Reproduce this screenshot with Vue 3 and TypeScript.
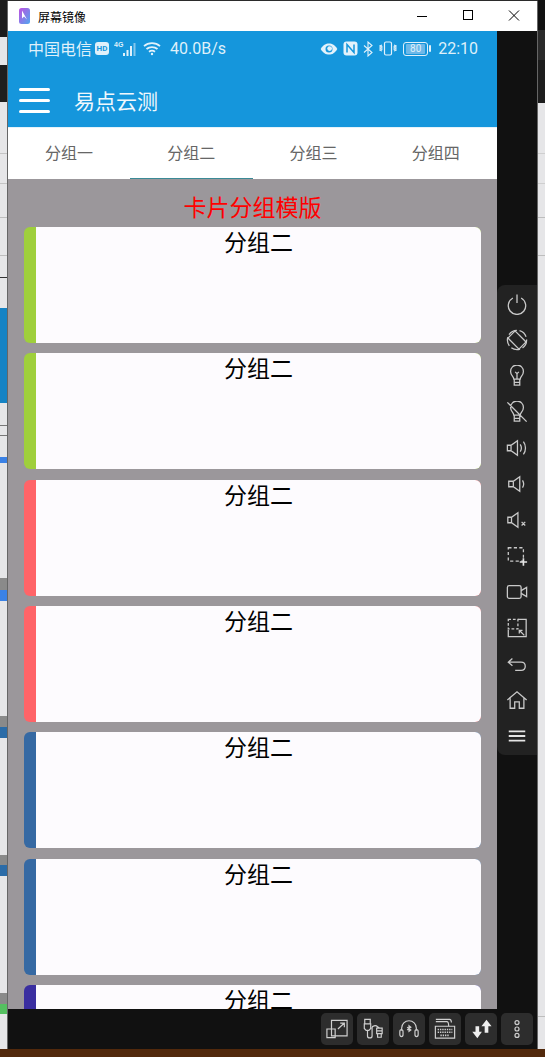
<script setup lang="ts">
interface Card {
  color: string
}

interface Strip {
  top: number
  height: number
  color: string
}

const tabs = ['分组一', '分组二', '分组三', '分组四']
const active = 1

const cards: Card[] = [
  { color: '#9fcf3c' },
  { color: '#9fcf3c' },
  { color: '#ff6468' },
  { color: '#ff6468' },
  { color: '#3669a3' },
  { color: '#3669a3' },
  { color: '#3a2ea0' },
]

// bits of the other windows that stick out left and right of the mirror window
const leftStrips: Strip[] = [
  { top: 0, height: 37, color: '#1c1c1c' },
  { top: 65, height: 37, color: '#1e1e1e' },
  { top: 153, height: 1, color: '#c4c4c4' },
  { top: 183, height: 1, color: '#c4c4c4' },
  { top: 217, height: 1, color: '#bdbdbd' },
  { top: 255, height: 1, color: '#bdbdbd' },
  { top: 277, height: 1, color: '#333' },
  { top: 308, height: 95, color: '#1583c4' },
  { top: 425, height: 1, color: '#777' },
  { top: 435, height: 1, color: '#777' },
  { top: 457, height: 6, color: '#3b82e6' },
  { top: 578, height: 12, color: '#8a8a8a' },
  { top: 590, height: 11, color: '#3b82e6' },
  { top: 716, height: 11, color: '#8a8a8a' },
  { top: 727, height: 11, color: '#2b6ca8' },
  { top: 855, height: 10, color: '#8a8a8a' },
  { top: 865, height: 11, color: '#2b6ca8' },
  { top: 993, height: 11, color: '#8a8a8a' },
  { top: 1004, height: 10, color: '#55c060' },
]

const rightStrips: Strip[] = [
  { top: 0, height: 30, color: '#111' },
  { top: 30, height: 30, color: '#2a2a2a' },
  { top: 60, height: 43, color: '#1d1d1d' },
  { top: 153, height: 1, color: '#cfcfcf' },
  { top: 183, height: 1, color: '#cfcfcf' },
  { top: 217, height: 1, color: '#bdbdbd' },
  { top: 255, height: 1, color: '#bdbdbd' },
  { top: 1016, height: 1, color: '#bdbdbd' },
]
</script>

<template>
  <div class="desktop">
    <div class="behind left">
      <div
        v-for="s in leftStrips"
        :key="s.top"
        class="strip"
        :style="{ top: s.top + 'px', height: s.height + 'px', background: s.color }"
      ></div>
    </div>
    <div class="behind right">
      <div
        v-for="s in rightStrips"
        :key="s.top"
        class="strip"
        :style="{ top: s.top + 'px', height: s.height + 'px', background: s.color }"
      ></div>
    </div>

    <div class="window">
      <div class="titlebar">
        <svg class="app-logo" width="11" height="16" viewBox="0 0 11 16">
          <defs>
            <linearGradient id="lg" x1="0" y1="0" x2="1" y2="1">
              <stop offset="0" stop-color="#c04fe0" />
              <stop offset="1" stop-color="#4fa8f0" />
            </linearGradient>
          </defs>
          <rect width="11" height="16" rx="2.5" fill="url(#lg)" />
          <path d="M3 2.5v8l2-2 3 3z" fill="#fff" />
        </svg>
        <span class="title">屏幕镜像</span>
        <div class="win-btns">
          <svg width="46" height="30" viewBox="0 0 46 30"><path d="M18 15.5h10" stroke="#000" /></svg>
          <svg width="46" height="30" viewBox="0 0 46 30"><rect x="18.5" y="9.5" width="9" height="9" fill="none" stroke="#000" /></svg>
          <svg width="46" height="30" viewBox="0 0 46 30"><path d="M18 9.5l10 10M28 9.5l-10 10" stroke="#000" /></svg>
        </div>
      </div>

      <div class="body">
        <div class="phone">
          <div class="statusbar">
            <span class="carrier">中国电信</span>
            <span class="hd">HD</span>
            <svg class="sig" width="24" height="16" viewBox="0 0 24 16" fill="#dff0fa">
              <text x="0" y="6" font-size="7" font-family="Liberation Sans" font-weight="700">4G</text>
              <rect x="9" y="12" width="2" height="3" />
              <rect x="12.5" y="9" width="2" height="6" />
              <rect x="16" y="5" width="2" height="10" />
              <rect x="19.5" y="2" width="2" height="13" opacity=".55" />
            </svg>
            <svg class="wifi" width="18" height="15" viewBox="0 0 18 15" fill="none" stroke="#e3f2fb" stroke-width="1.8">
              <path d="M1 5.2c4.5-4 11.500-4 16 0M3.5 8c3-2.600 8-2.600 11 0M6 10.700c1.700-1.300 4.300-1.300 6 0" />
              <circle cx="9" cy="13" r="1.2" fill="#e3f2fb" stroke="none" />
            </svg>
            <span class="speed">40.0B/s</span>
            <span class="spacer"></span>
            <svg class="st-icon" width="18" height="12" viewBox="0 0 19 13">
              <path d="M.5 6.500C3 2 6 .5 9.500 .5s6.500 1.500 9 6c-2.500 4.500-5.500 6-9 6s-6.500-1.500-9-6z" fill="#e3f2fb" />
              <circle cx="9.500" cy="6.500" r="3.800" fill="#1596dc" />
              <circle cx="10.200" cy="6" r="2.600" fill="#e3f2fb" />
            </svg>
            <svg class="st-icon" width="15" height="15" viewBox="0 0 15 15">
              <rect x=".5" y=".5" width="14" height="14" rx="3" fill="#e3f2fb" />
              <path d="M4 11.500v-8l7 8v-8" fill="none" stroke="#1596dc" stroke-width="1.500" />
            </svg>
            <svg class="st-icon bt" width="10" height="16" viewBox="0 0 10 15" fill="none" stroke="#e3f2fb" stroke-width="1.100">
              <path d="M1 4l8 7-4 3.500V.5L9 4l-8 7" />
            </svg>
            <svg class="st-icon vib" width="18" height="15" viewBox="0 0 18 14" fill="none" stroke="#e3f2fb" stroke-width="1.200">
              <rect x="5.500" y=".5" width="7" height="13" rx="1.500" />
              <path d="M3 3.500l-2 1 2 1-2 1 2 1-2 1 2 1M15 3.500l2 1-2 1 2 1-2 1 2 1-2 1" />
            </svg>
            <div class="battery">
              <div class="batt-body"><span class="batt-num">80</span></div>
              <div class="batt-tip"></div>
            </div>
            <span class="clock">22:10</span>
          </div>

          <div class="appbar">
            <div class="burger"><i></i><i></i><i></i></div>
            <span class="app-title">易点云测</span>
          </div>

          <div class="tabs">
            <div v-for="(t, i) in tabs" :key="t" class="tab" :class="{ on: i === active }">
              <span class="tab-text">{{ t }}</span>
            </div>
          </div>

          <div class="content">
            <div class="heading">卡片分组模版</div>
            <div class="list">
              <div v-for="(c, i) in cards" :key="i" class="card" :style="{ background: c.color }">
                <div class="card-inner">分组二</div>
              </div>
            </div>
          </div>
        </div>

        <div class="side">
          <div class="toolbar">
            <svg viewBox="0 0 24 24"><path d="M7.500 5.500a9.500 9.500 0 1 0 9 0M12 1.500v9.500" /></svg>
            <svg viewBox="0 0 24 24"><circle cx="12" cy="12" r="10.500" stroke-dasharray="10 3" /><rect x="6.500" y="3.500" width="11" height="17" rx="1.500" transform="rotate(-45 12 12)" /></svg>
            <svg viewBox="0 0 24 24"><path d="M8.500 15.500c0-3-3.500-4-3.500-8.500a7 7 0 0 1 14 0c0 4.500-3.500 5.500-3.500 8.500zM9 19h6M9 15.500V22h6v-6.500M12 15.500v-6M10 7.500l2 2 2-2" /></svg>
            <svg viewBox="0 0 24 24"><path d="M8.500 15.500c0-3-3.500-4-3.500-8.500a7 7 0 0 1 14 0c0 4.500-3.500 5.500-3.500 8.500zM9 19h6M9 15.500V22h6v-6.500M1.500 1.500l21 21" /></svg>
            <svg viewBox="0 0 24 24"><path d="M1.500 9v6h4l7 5V4l-7 5zM5.500 9v6M15.500 8c1.600 2.500 1.600 5.500 0 8M19 5c3 4 3 10 0 14" /></svg>
            <svg viewBox="0 0 24 24"><path d="M3 9v6h5l7 5V4L8 9zM8 9v6M18 8c1.600 2.500 1.600 5.500 0 8" /></svg>
            <svg viewBox="0 0 24 24"><path d="M2 9v6h4l7 5V4L6 9zM6 9v6M17 14l4 4M21 14l-4 4" /></svg>
            <svg viewBox="0 0 24 24"><path d="M2.500 3h16.500v14.500H2.500z" stroke-dasharray="3.500 2.500" /><path class="thick-cross" d="M19 14.500v8M15 18.500h8" /></svg>
            <svg viewBox="0 0 24 24"><rect x="1.500" y="5" width="15" height="14" rx="2" /><path d="M16.500 10.500l6-3.500v10l-6-3.500" /></svg>
            <svg viewBox="0 0 24 24"><path d="M13 2.500h9v19H2.500V14" /><path d="M2.500 2.500h10.500V13H2.500z" stroke-dasharray="3 2" /><path d="M20 20l-5.500-5.500M14.500 18v-3.500H18" /></svg>
            <svg viewBox="0 0 24 24"><path d="M7 6L2.500 10 7 14M2.500 10h14c6 0 6 9 0 9H10" /></svg>
            <svg viewBox="0 0 24 24"><path d="M1.500 12L12 3l10.500 9M4.500 10v11h5v-7h5v7h5V10" /></svg>
            <svg viewBox="0 0 24 24"><path class="thick" d="M3 7h18M3 12h18M3 17h18" /></svg>
          </div>
        </div>
      </div>

      <div class="bottombar">
        <div class="tbtn">
          <svg viewBox="0 0 24 24"><path d="M6 2.500h17v17H6zM1 12h9v9.500H1zM13 12l7-6.500M15.500 5.500H20V10" /></svg>
        </div>
        <div class="tbtn">
          <svg viewBox="0 0 24 24"><path d="M3 1.500h6v5H3zM2.500 6.500h7v5l-2 2h-3l-2-2zM6 13.500v6c0 3 5 3 5 0v-9c0-2 4-3 6-1l2 1.500M16 11h6v6h-6zM17 17h4v4h-4zM16 14h6" /></svg>
        </div>
        <div class="tbtn">
          <svg viewBox="0 0 24 24"><path d="M4 14v-3a8 8 0 0 1 16 0v3M2 15c0-3 3.500-3 3.500 0v3c0 3-3.500 3-3.500 0zM22 15c0-3-3.500-3-3.500 0v3c0 3 3.500 3 3.500 0zM10 10l4 3-2 1.500v-6l2 1.500-4 3" /></svg>
        </div>
        <div class="tbtn">
          <svg viewBox="0 0 24 24"><path d="M2 1.500h15c2 0 2 2 2 3.500M2 4h12c2 0 2 3 2 5" /><path d="M1.500 9h21v13h-21z" /><path class="dash" d="M4 12.500h16M4 15.500h16M7 19h10" /></svg>
        </div>
        <div class="tbtn">
          <svg viewBox="0 0 24 24"><path class="solid" d="M6 9v6H2.500L8 22l5-7H10V9zM18 2l-5.500 7H16v7h4V9h3.500z" /></svg>
        </div>
        <div class="tbtn">
          <svg viewBox="0 0 24 24"><circle cx="12" cy="5" r="2.200" /><circle cx="12" cy="12" r="2.200" /><circle cx="12" cy="19" r="2.200" /></svg>
        </div>
      </div>
    </div>

    <div class="ground"></div>
  </div>
</template>

<style>
html,
body {
  margin: 0;
  padding: 0;
  overflow: hidden;
}
</style>

<style scoped>
.desktop {
  position: relative;
  width: 545px;
  height: 1057px;
  background: #2b2b2b;
  overflow: hidden;
  font-family: 'Noto Sans CJK SC', 'Liberation Sans', sans-serif;
}

.behind {
  position: absolute;
  top: 0;
  height: 1049px;
  background: #e6e6e8;
}

.behind.left {
  left: 0;
  width: 7px;
}

.behind.right {
  left: 538px;
  width: 7px;
}

.strip {
  position: absolute;
  left: 0;
  width: 100%;
}

.window {
  position: absolute;
  left: 7px;
  top: 1px;
  width: 531px;
  height: 1048px;
  box-sizing: border-box;
  display: flex;
  flex-direction: column;
  background: #111;
  border-left: 1px solid #666;
  border-right: 1px solid #666;
}

.titlebar {
  height: 30px;
  flex: none;
  display: flex;
  align-items: center;
  background: #fff;
}

.app-logo {
  margin-left: 11px;
}

.title {
  margin-left: 8px;
  font-size: 12px;
  color: #000;
}

.win-btns {
  margin-left: auto;
  display: flex;
}

.body {
  flex: 1;
  min-height: 0;
  display: flex;
}

.phone {
  width: 489px;
  flex: none;
  display: flex;
  flex-direction: column;
  overflow: hidden;
}

.statusbar {
  height: 35px;
  flex: none;
  display: flex;
  align-items: center;
  padding: 0 19px 0 20px;
  background: #1596dc;
  color: #dff0fa;
  font-family: Roboto, 'Noto Sans CJK SC', sans-serif;
}

.carrier {
  font-size: 16px;
  font-family: 'Noto Sans CJK SC', sans-serif;
  line-height: 20px;
  padding-bottom: 2px;
}

.hd {
  margin-left: 3px;
  width: 14px;
  height: 13px;
  border-radius: 3px;
  background: #dff0fa;
  color: #1596dc;
  font-size: 8px;
  font-weight: 700;
  line-height: 13px;
  text-align: center;
}

.sig {
  margin-left: 5px;
}

.wifi {
  margin-left: 5px;
}

.speed {
  margin-left: 9px;
  font-size: 16px;
}

.spacer {
  flex: 1;
}

.st-icon {
  margin-right: 5px;
}

.st-icon.vib {
  margin-left: 1px;
  margin-right: 6px;
}

.battery {
  display: flex;
  align-items: center;
}

.batt-body {
  width: 23px;
  height: 12px;
  border: 1px solid #dff0fa;
  border-radius: 3px;
  display: flex;
  align-items: center;
  justify-content: center;
}

.batt-num {
  width: 19px;
  height: 10px;
  border-radius: 1px;
  background: #6db8e8;
  font-size: 10px;
  line-height: 10px;
  text-align: center;
}

.batt-tip {
  width: 2px;
  height: 7px;
  margin-left: 1px;
  background: #dff0fa;
  border-radius: 1px;
}

.clock {
  margin-left: 7px;
  font-size: 16px;
}

.appbar {
  height: 61px;
  flex: none;
  box-sizing: border-box;
  display: flex;
  align-items: center;
  padding: 6px 0 0 11px;
  background: #1596dc;
  color: #f0f8fd;
}

.burger {
  width: 31px;
  height: 25px;
  margin-top: 2px;
  display: flex;
  flex-direction: column;
  justify-content: space-between;
}

.burger i {
  display: block;
  height: 3px;
  border-radius: 2px;
  background: #fff;
}

.app-title {
  margin-left: 24px;
  font-size: 21px;
}

.tabs {
  height: 52px;
  flex: none;
  display: flex;
  background: #fff;
  border-top: 1px solid #e4f2fa;
  box-sizing: border-box;
}

.tab {
  flex: 1;
  display: flex;
  align-items: center;
  justify-content: center;
  padding-bottom: 3px;
  box-sizing: border-box;
  font-size: 16px;
  color: #666;
}

.tab.on {
  box-shadow: inset 0 -1px 0 #3b8a96;
}

.content {
  flex: 1;
  min-height: 0;
  background: #9b979b;
  overflow: hidden;
}

.heading {
  height: 48px;
  box-sizing: border-box;
  padding-top: 11px;
  font-size: 23px;
  line-height: 32px;
  color: #f00;
  text-align: center;
}

.list {
  display: flex;
  flex-direction: column;
  gap: 10.35px;
  padding: 0 16px;
}

.card {
  height: 116px;
  flex: none;
  padding-left: 12px;
  border-radius: 6px;
}

.card-inner {
  height: 100%;
  border-radius: 0 6px 6px 0;
  background: #fdfbfe;
  color: #000;
  font-size: 23px;
  line-height: 28px;
  text-align: center;
}

.side {
  flex: 1;
  position: relative;
}

.toolbar {
  position: absolute;
  left: 0;
  top: 254px;
  width: 40px;
  height: 470px;
  box-sizing: border-box;
  padding-top: 1px;
  display: flex;
  flex-direction: column;
  align-items: center;
  background: #222;
  border-radius: 8px 0 0 8px;
}

.toolbar svg {
  flex: none;
  width: 22px;
  height: 22px;
  margin: 7px 0;
  fill: none;
  stroke: #c9c9c9;
  stroke-width: 1.400;
}

.toolbar .thick {
  stroke: #e4e4e4;
  stroke-width: 2;
}

.toolbar .thick-cross {
  stroke: #e4e4e4;
  stroke-width: 1.800;
}

.bottombar {
  height: 40px;
  flex: none;
  display: flex;
  justify-content: flex-end;
  align-items: center;
  gap: 4px;
  padding-right: 4px;
}

.tbtn {
  width: 32px;
  height: 32px;
  display: flex;
  align-items: center;
  justify-content: center;
  border-radius: 5px;
  background: #2d2d2d;
}

.tbtn svg {
  width: 22px;
  height: 22px;
  fill: none;
  stroke: #cfcfcf;
  stroke-width: 1.300;
}

.tbtn .dash {
  stroke-dasharray: 1.500 1;
  stroke-width: 1.800;
}

.tbtn .solid {
  fill: #eee;
  stroke: none;
}

.ground {
  position: absolute;
  left: 0;
  right: 0;
  top: 1049px;
  bottom: 0;
  background: #52290c;
}
</style>
